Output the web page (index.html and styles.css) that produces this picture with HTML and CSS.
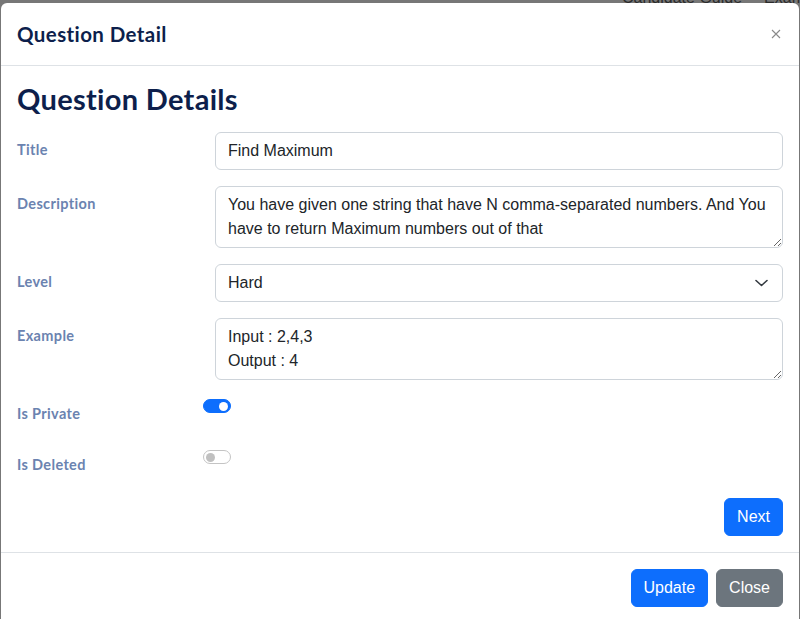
FILE: index.html
```html
<!DOCTYPE html>
<html>
<head>
<meta charset="utf-8">
<link rel="stylesheet" href="styles.css">
</head>
<body>
<div class="backdrop-text">Candidate Guide<span class="gap"></span>Exam</div>
<div class="modal">
  <div class="modal-header">
    <h5 class="modal-title">Question Detail</h5>
    <button class="btn-close" aria-label="Close">
      <svg width="10" height="10" viewBox="0 0 10 10"><path d="M1 1L9 9M9 1L1 9" stroke="#8a8a8a" stroke-width="1.1" fill="none"/></svg>
    </button>
  </div>
  <div class="modal-body">
    <h3 class="page-title">Question Details</h3>
    <div class="row">
      <label class="lbl">Title</label>
      <div class="field"><input class="control" type="text" value="Find Maximum"></div>
    </div>
    <div class="row">
      <label class="lbl">Description</label>
      <div class="field"><textarea class="control area" rows="2">You have given one string that have N comma-separated numbers. And You have to return Maximum numbers out of that</textarea></div>
    </div>
    <div class="row">
      <label class="lbl">Level</label>
      <div class="field">
        <div class="control select">
          <span>Hard</span>
          <svg width="13" height="8" viewBox="0 0 13 8"><path d="M1 1.5l5.5 5 5.5-5" stroke="#343a40" stroke-width="1.6" fill="none" stroke-linecap="round" stroke-linejoin="round"/></svg>
        </div>
      </div>
    </div>
    <div class="row">
      <label class="lbl">Example</label>
      <div class="field"><textarea class="control area" rows="2">Input : 2,4,3
Output : 4</textarea></div>
    </div>
    <div class="row">
      <label class="lbl">Is Private</label>
      <div class="switch-col"><span class="switch on"><span class="knob"></span></span></div>
    </div>
    <div class="row">
      <label class="lbl">Is Deleted</label>
      <div class="switch-col"><span class="switch off"><span class="knob"></span></span></div>
    </div>
    <div class="next-row"><button class="btn primary">Next</button></div>
  </div>
  <div class="modal-footer">
    <button class="btn primary">Update</button>
    <button class="btn secondary">Close</button>
  </div>
</div>
</body>
</html>
```
FILE: styles.css
```css
html, body {
  margin: 0;
  padding: 0;
  height: 619px;
  overflow: hidden;
}
body {
  background: #777777;
  position: relative;
}
.backdrop-text {
  position: absolute;
  top: -11px;
  left: 622px;
  font-family: "Liberation Sans", Arial, sans-serif;
  font-size: 16px;
  color: #2b2b2b;
  white-space: nowrap;
}
.backdrop-text .gap {
  display: inline-block;
  width: 22px;
}
.modal {
  position: relative;
  margin: 3px 1px 0 1px;
  width: 798px;
  height: 640px;
  background: #ffffff;
  border-radius: 6px 6px 0 0;
}
.modal-header {
  display: flex;
  align-items: center;
  justify-content: space-between;
  padding: 16px;
  border-bottom: 1px solid #dee2e6;
}
.modal-title {
  margin: 0;
  font-family: Lato, "Noto Sans", sans-serif;
  font-weight: 700;
  font-size: 20.5px;
  letter-spacing: 0.4px;
  line-height: 30px;
  color: #0d1f4c;
}
.btn-close {
  background: none;
  border: 0;
  padding: 0;
  margin-right: 2px;
  width: 10px;
  height: 10px;
  display: flex;
}
.modal-body {
  padding: 16px;
}
.page-title {
  margin: 0 0 16px 0;
  font-family: Lato, "Noto Sans", sans-serif;
  font-weight: 700;
  font-size: 29px;
  letter-spacing: 0.3px;
  line-height: 34px;
  color: #0d1f4c;
}
.row {
  display: flex;
  margin-bottom: 16px;
}
.lbl {
  width: 198px;
  flex: none;
  box-sizing: border-box;
  padding: 7px 0;
  font-family: Lato, "Noto Sans", sans-serif;
  font-weight: 700;
  font-size: 14.5px;
  letter-spacing: 0.35px;
  line-height: 21px;
  color: #6b83b0;
}
.field {
  flex: 1;
}
.control {
  display: block;
  box-sizing: border-box;
  width: 100%;
  margin: 0;
  font-family: "Liberation Sans", Arial, sans-serif;
  font-size: 16px;
  line-height: 24px;
  color: #212529;
  background: #fff;
  border: 1px solid #ced4da;
  border-radius: 6px;
  padding: 6px 12px;
  height: 38px;
  outline: none;
}
.area {
  height: 62px;
  resize: vertical;
}
.select {
  display: flex;
  align-items: center;
  justify-content: space-between;
  padding-right: 14px;
}
.switch-col {
  margin-left: -12px;
  padding-top: 3px;
}
.switch {
  display: flex;
  align-items: center;
  box-sizing: border-box;
  width: 28px;
  height: 14px;
  border-radius: 7px;
  padding: 0 2px;
}
.switch .knob {
  width: 9px;
  height: 9px;
  border-radius: 50%;
}
.switch.on {
  background: #0d6efd;
  border: 1px solid #0d6efd;
  justify-content: flex-end;
}
.switch.on .knob {
  background: #fff;
}
.switch.off {
  background: #fff;
  border: 1px solid #c4c4c4;
  justify-content: flex-start;
}
.switch.off .knob {
  background: #c0c0c0;
}
.next-row {
  display: flex;
  justify-content: flex-end;
}
.btn {
  font-family: "Liberation Sans", Arial, sans-serif;
  font-size: 16px;
  line-height: 24px;
  padding: 6px 12px;
  border-radius: 6px;
  border: 1px solid transparent;
  color: #fff;
  cursor: pointer;
}
.primary {
  background: #0d6efd;
  border-color: #0d6efd;
}
.secondary {
  background: #6c757d;
  border-color: #6c757d;
}
.modal-footer {
  display: flex;
  justify-content: flex-end;
  gap: 8px;
  padding: 16px 16px 12px 12px;
  border-top: 1px solid #dee2e6;
}
```
